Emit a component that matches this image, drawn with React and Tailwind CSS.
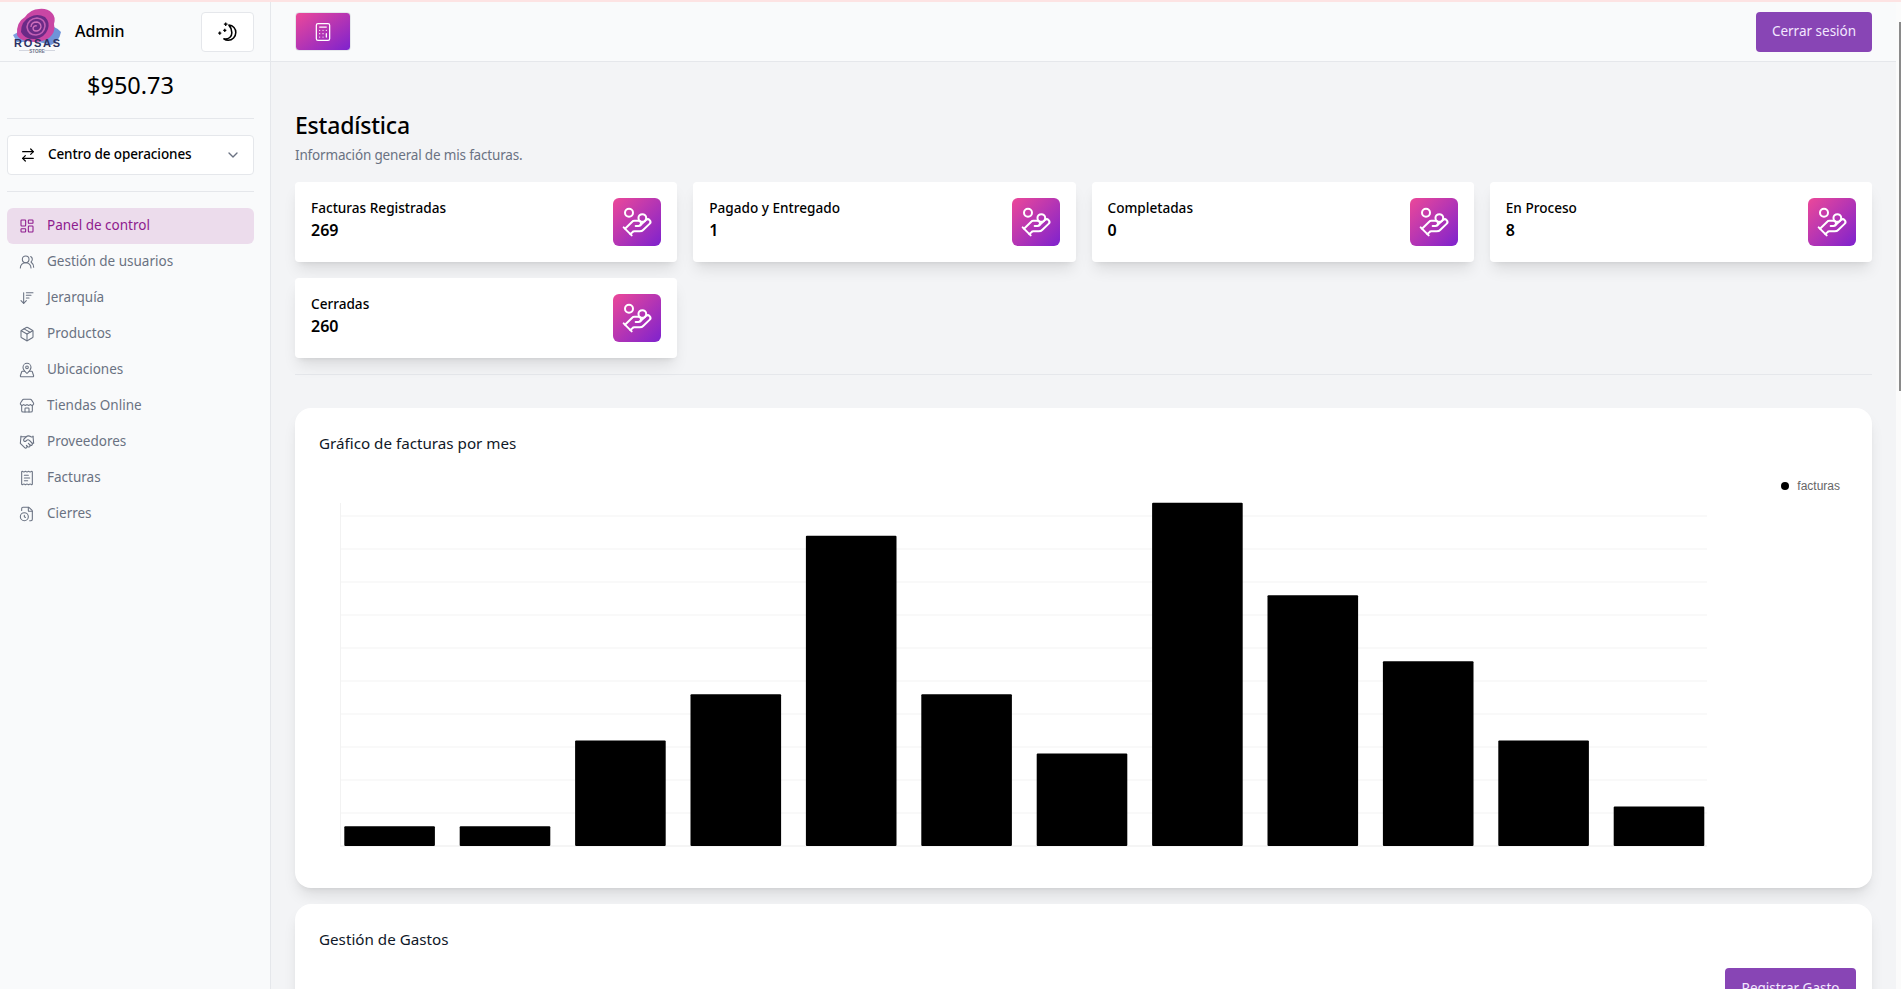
import React from "react";
import {
  ArrowRightLeft, ChevronDown, LayoutDashboard, UsersRound, ArrowDownWideNarrow, Package, MapPinned,
  Store, Handshake, ReceiptText, FileClock, Calculator, HandCoins,
} from "lucide-react";

const font = "font-['Noto_Sans','Open_Sans',sans-serif]";

const menu = [
  ["Panel de control", LayoutDashboard, true],
  ["Gestión de usuarios", UsersRound],
  ["Jerarquía", ArrowDownWideNarrow],
  ["Productos", Package],
  ["Ubicaciones", MapPinned],
  ["Tiendas Online", Store],
  ["Proveedores", Handshake],
  ["Facturas", ReceiptText],
  ["Cierres", FileClock],
];

const stats = [
  ["Facturas Registradas", 269],
  ["Pagado y Entregado", 1],
  ["Completadas", 0],
  ["En Proceso", 8],
  ["Cerradas", 260],
];

const values = [3, 3, 16, 23, 47, 23, 14, 52, 38, 28, 16, 6];

function Logo() {
  return (
    <svg width="48" height="48" viewBox="0 0 48 48" className="shrink-0 overflow-visible">
      <path d="M30 17 Q42 17 48 24 Q46 34 38 37 L26 34 Z" fill="#6f93d8" />
      <path d="M0 27 Q6 22 12 24 L14 34 L4 34 Z" fill="#7f9fe0" />
      <path d="M4 27 Q3 14 12 9 Q18 1 26 1 Q34 0 39 5 Q43 9 41 16 Q43 24 36 30 Q26 36 14 33 Q6 32 4 27 Z" fill="#c946a4" />
      <path d="M8 24 Q8 13 17 9 Q24 5 32 9 Q37 14 35 21 Q32 29 23 31 Q12 32 8 24 Z" fill="#6a2a86" />
      <path d="M14 19 Q15 11 24 10 Q32 11 32 18 Q31 26 23 27 Q15 27 14 19 Z" fill="none" stroke="#c25fb4" strokeWidth="1.6" />
      <path d="M18 19 Q18 14 24 14 Q28 15 28 19 Q27 23 23 23 Q20 23 20 20 Q21 17 24 18" fill="none" stroke="#d070bd" strokeWidth="1.3" />
      <text x="24" y="38.5" textAnchor="middle" fontSize="11" fontWeight="700" fill="#2b3160" fontFamily="Liberation Sans, sans-serif" textLength="46" lengthAdjust="spacing">ROSAS</text>
      <line x1="6" x2="16" y1="42.5" y2="42.5" stroke="#b9bdcc" strokeWidth="0.6" />
      <line x1="31" x2="42" y1="42.5" y2="42.5" stroke="#b9bdcc" strokeWidth="0.6" />
      <text x="24" y="44.5" textAnchor="middle" fontSize="4.5" fontWeight="700" fill="#6a7088" fontFamily="Liberation Sans, sans-serif">STORE</text>
    </svg>
  );
}

function MoonStars() {
  return (
    <svg width="22" height="22" viewBox="0 0 24 24" fill="none" stroke="#000" strokeLinejoin="round">
      <path d="M13 4.500c4.600.4 7.500 3.900 7.500 8 0 4.700-3.700 8.500-8.300 8.500-1.900 0-3.500-.6-4.700-1.500 5.600.8 8.700-2.600 8.700-6.800 0-3.200-1.200-6-3.200-8.200z" strokeWidth="1.700" />
      <path d="M9.500 1.500v4M7.500 3.500h4M8.500 8.500v3.400M6.800 10.200h3.400M3 11.500v3.400M1.300 13.200h3.400" strokeWidth="1.400" />
    </svg>
  );
}

function Chart() {
  const base = 348;
  const unit = 6.6;
  const grid = [];
  for (let v = 0; v <= 50; v += 5) grid.push(base - v * unit);
  return (
    <svg viewBox="0 0 1576 390" width="1576" height="390" className="block absolute left-0 top-[90px]">
      {grid.map((y, i) => (
        <line key={y} x1="45" x2="1412" y1={y} y2={y} stroke={i === 0 ? "#ececec" : "#f4f4f4"} strokeWidth="1.200" />
      ))}
      <line x1="45.500" x2="45.500" y1="5" y2={base} stroke="#f2f2f2" strokeWidth="1" />
      {values.map((v, i) => (
        <rect key={i} x={49.3 + i * 115.4} y={base - v * unit} width="90.6" height={v * unit} rx="1" fill="#000" />
      ))}
    </svg>
  );
}

export default function App() {
  return (
    <div className={`${font} h-screen w-full overflow-hidden flex flex-col bg-gray-100 text-black`}>
      <div className="h-[2px] shrink-0 bg-[#fde3e3]" />
      <div className="flex flex-1 min-h-0">
        <aside className="w-[271px] shrink-0 bg-gray-50 border-r border-gray-200 flex flex-col">
          <div className="h-[60px] shrink-0 border-b border-gray-200 flex items-center pl-[13px] pr-4">
            <Logo />
            <span className="ml-[14px] text-base font-medium tracking-[-0.1px] pb-px">Admin</span>
            <button className="ml-auto w-[53px] h-10 bg-white border border-gray-200 rounded-sm flex items-center justify-center">
              <MoonStars />
            </button>
          </div>
          <div className="h-[57px] shrink-0 ml-[7px] mr-4 flex items-center justify-center text-[23.5px] border-b border-gray-200 pb-[8px]">
            $950.73
          </div>
          <div className="ml-[7px] mr-4 h-[73px] shrink-0 border-b border-gray-200 flex items-center">
            <button className="w-full h-10 bg-white border border-gray-200 rounded-sm flex items-center pl-3 pr-3 text-[13.5px] font-medium tracking-[-0.1px]">
              <ArrowRightLeft size={16} strokeWidth={1.8} />
              <span className="ml-3 pb-px">Centro de operaciones</span>
              <ChevronDown size={16} className="ml-auto text-gray-500" />
            </button>
          </div>
          <nav className="ml-[7px] mr-4 mt-[16px] flex flex-col">
            {menu.map(([label, Icon, active]) => (
              <div
                key={label}
                className={`h-9 flex items-center pl-3 rounded-md text-[13.5px] ${active ? "bg-[#ecdcec] text-[#8e1a8e]" : "text-gray-500"}`}
              >
                <Icon size={16} strokeWidth={1.6} />
                <span className="ml-3 pb-[2px]">{label}</span>
              </div>
            ))}
          </nav>
        </aside>
        <div className="flex-1 min-w-0 flex flex-col">
          <header className="h-[60px] shrink-0 bg-gray-50 border-b border-gray-200 flex items-center justify-between pl-6 pr-6">
            <button className="w-14 h-[39px] rounded-sm bg-linear-to-br/srgb from-[#ec4899] to-[#7e22ce] flex items-center justify-center text-white border border-gray-200">
              <Calculator size={20} strokeWidth={1.5} />
            </button>
            <button className="w-[116px] h-10 rounded-sm bg-[#8845b5] text-[#f3e8ff] text-[13.5px] flex items-center justify-center">
              Cerrar sesión
            </button>
          </header>
          <main className="flex-1 min-h-0 overflow-hidden px-6 pt-[47px]">
            <h1 className="text-[23px] tracking-[-0.2px] font-medium leading-8">Estadística</h1>
            <p className="text-[13.5px] tracking-[-0.17px] text-gray-500 mt-[4px] leading-5">Información general de mis facturas.</p>
            <div className="grid grid-cols-4 gap-4 mt-[17px]">
              {stats.map(([label, value]) => (
                <div key={label} className="h-20 bg-white rounded-sm shadow-lg p-4 flex items-start justify-between">
                  <div className="text-[13.6px] font-medium leading-5">
                    <div>{label}</div>
                    <div className="text-base leading-6 font-semibold">{value}</div>
                  </div>
                  <div className="w-12 h-12 rounded-md bg-linear-to-br/srgb from-[#ec4899] to-[#7e22ce] text-white flex items-center justify-center">
                    <HandCoins size={32} strokeWidth={1.5} />
                  </div>
                </div>
              ))}
            </div>
            <hr className="border-gray-200 mt-4" />
            <section className="relative h-[480px] mt-[33px] bg-white rounded-2xl shadow-lg px-6 pt-6">
              <h2 className="text-[15.2px] leading-6 text-gray-900 -mt-px">Gráfico de facturas por mes</h2>
              <div className="absolute right-[32px] top-[70px] flex items-center gap-2 text-xs text-[#666] font-['Liberation_Sans',sans-serif]">
                <span className="w-2 h-2 rounded-full bg-black" />
                facturas
              </div>
              <Chart />
            </section>
            <section className="relative mt-4 bg-white rounded-2xl shadow-lg px-6 pt-[23px] h-[200px]">
              <h2 className="text-[15.2px] leading-6 text-gray-900">Gestión de Gastos</h2>
              <div className="flex justify-end mt-[17px] -mr-2">
                <button className="w-[131px] h-10 rounded-sm bg-[#8845b5] text-[#f3e8ff] text-[13.5px]">Registrar Gasto</button>
              </div>
            </section>
          </main>
        </div>
        <div className="w-[5px] shrink-0 bg-[#fbfbfb] relative">
          <div className="absolute right-0 top-[20px] h-[369px] w-[2px] bg-[#8a8a8a]" />
        </div>
      </div>
    </div>
  );
}
